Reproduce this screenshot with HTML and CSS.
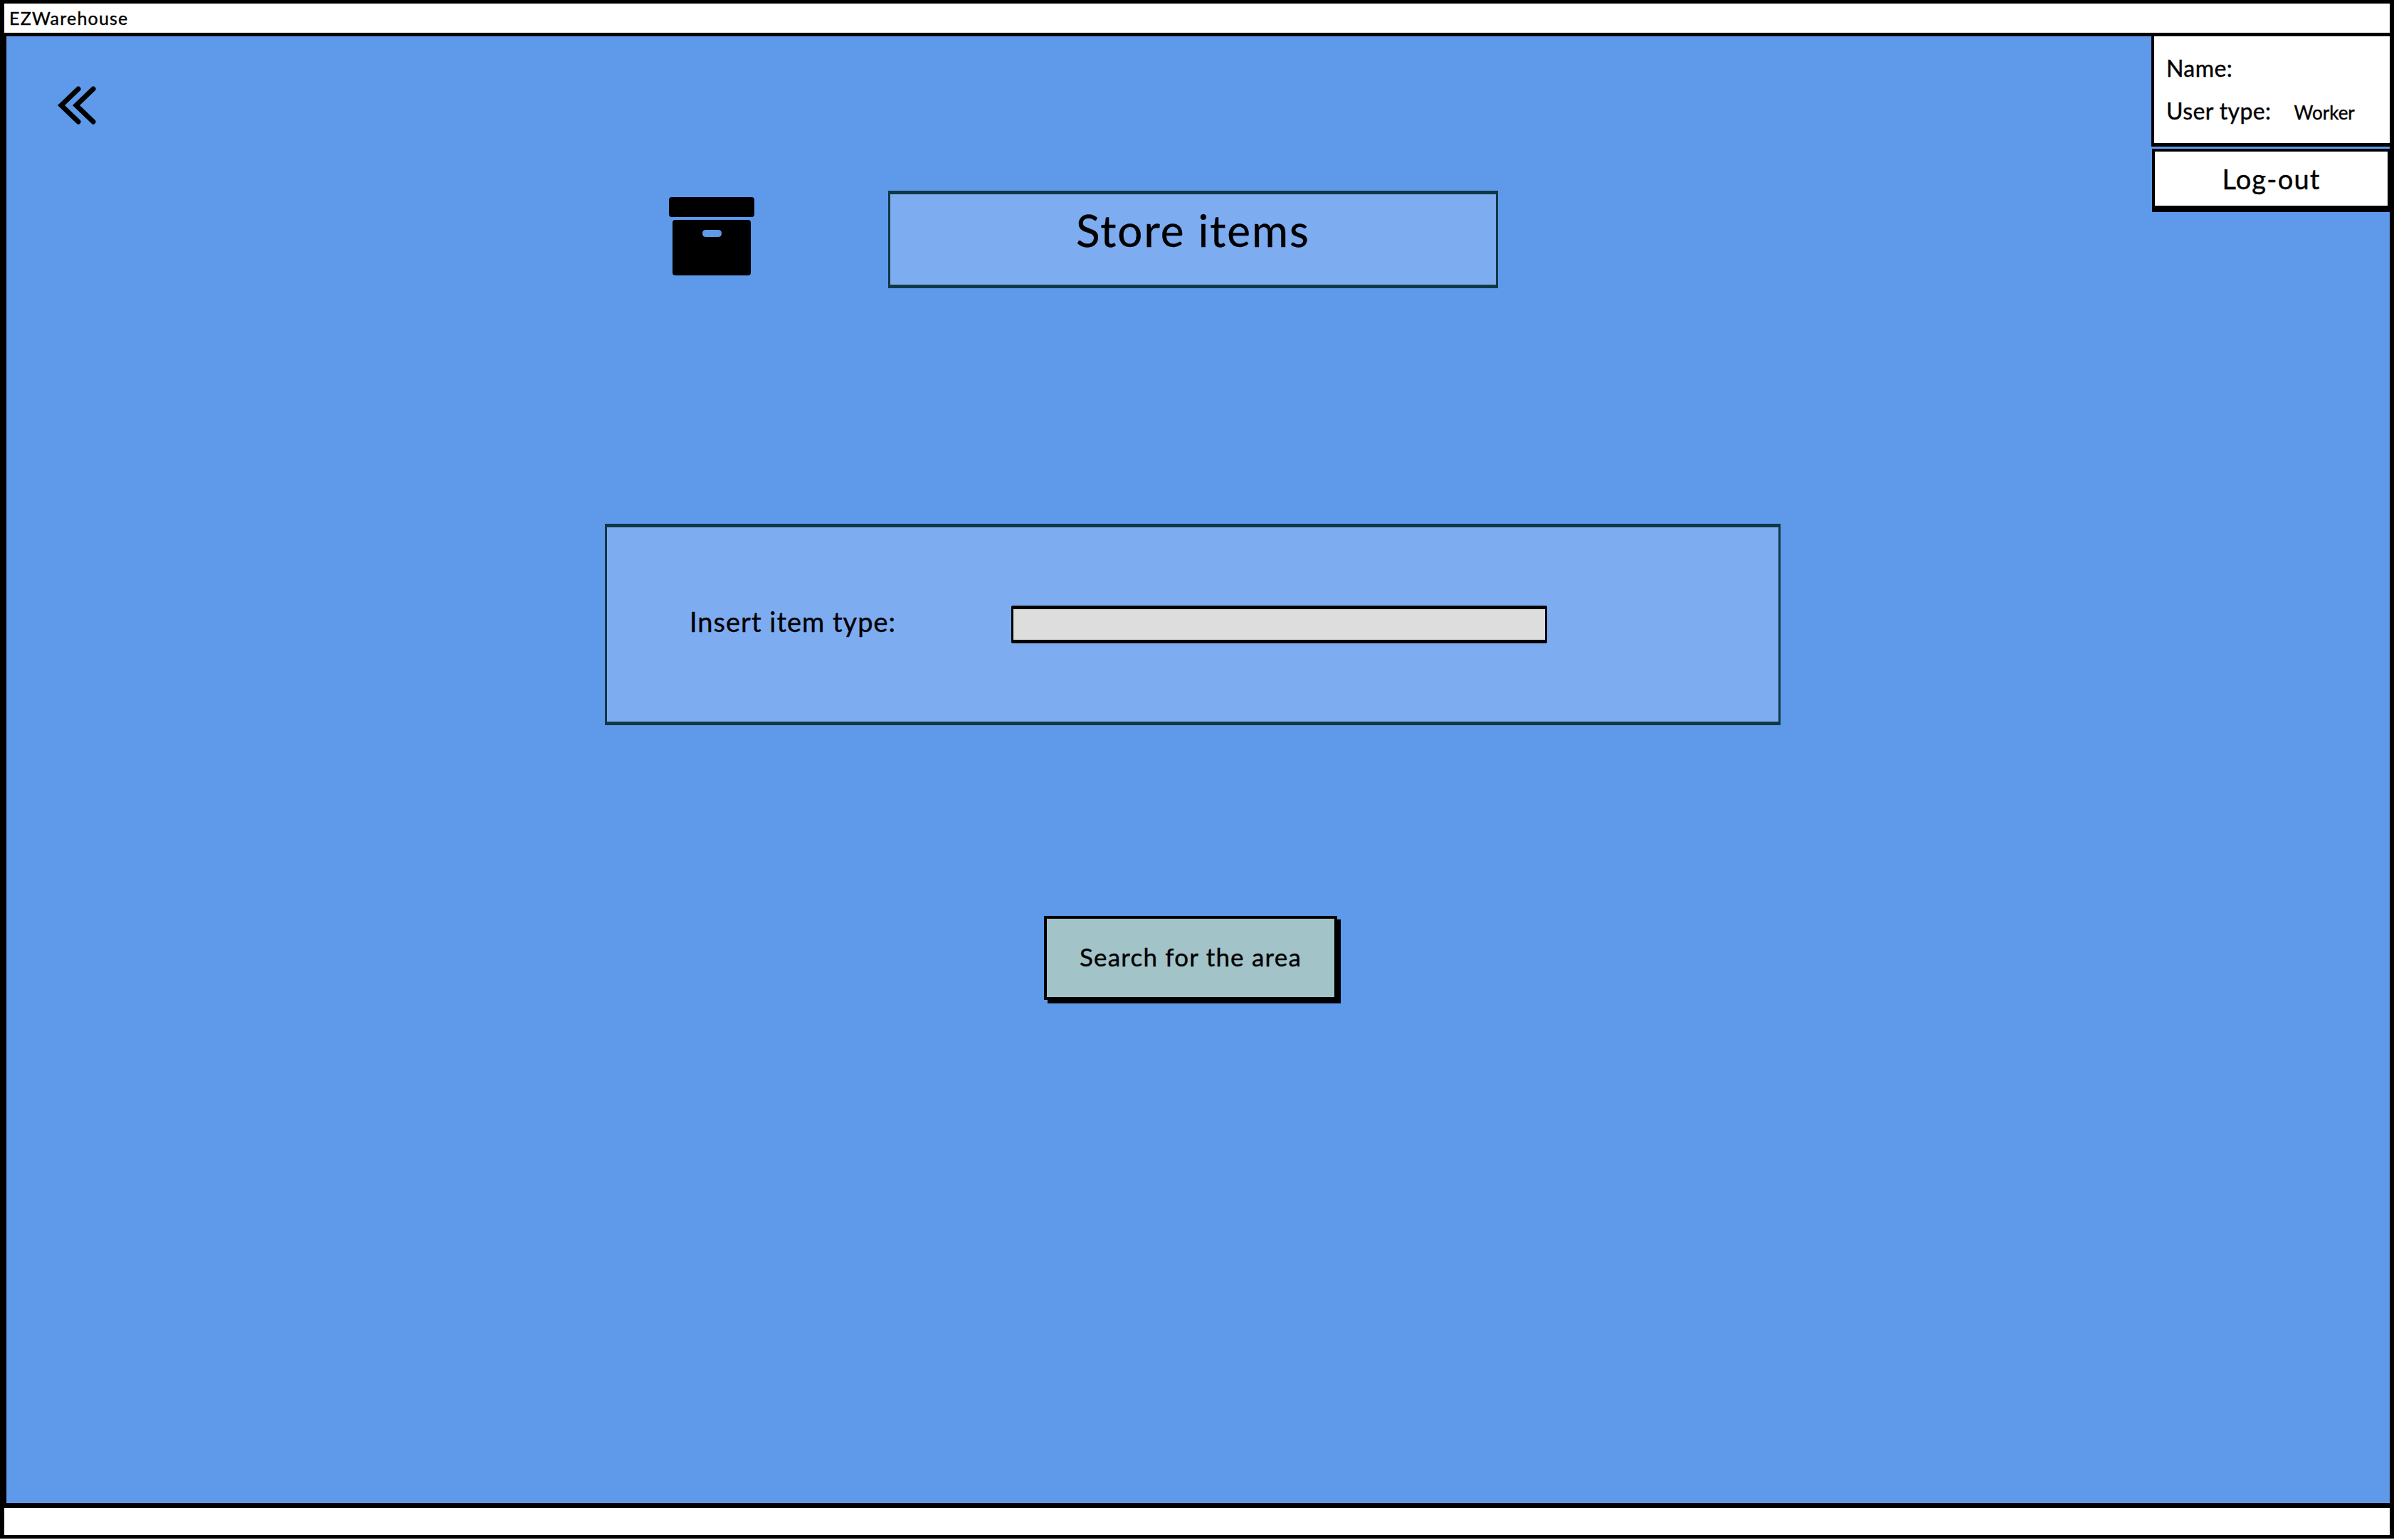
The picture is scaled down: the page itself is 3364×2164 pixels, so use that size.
FILE: index.html
```html
<!DOCTYPE html>
<html lang="en">
<head>
    <meta charset="UTF-8">
    <title>EZWarehouse</title>
    <link rel="stylesheet" href="styles.css">
</head>
<body>

<header class="topbar">EZWarehouse</header>

<main class="screen">
    <!-- user menu sits over the corner of the screen -->
    <aside class="user-menu">
        <div class="user-info">
            <p class="user-line">Name:</p>
            <p class="user-line">User type:<span class="user-value">Worker</span></p>
        </div>
        <button class="logout">Log-out</button>
    </aside>

    <svg class="back" viewBox="0 0 56 56" aria-label="Back">
        <path d="M30 5 L6 28 L30 51 M51 5 L27 28 L51 51"></path>
    </svg>

    <div class="title-row">
        <svg class="box-icon" viewBox="0 0 120 110">
            <rect class="box-part" x="0" y="0" width="120" height="28" rx="4"></rect>
            <path class="box-part" fill-rule="evenodd" d="M9 32 H111 Q115 32 115 36 V106 Q115 110 111 110 H9 Q5 110 5 106 V36 Q5 32 9 32 Z M52 46 Q47 46 47 51 Q47 56 52 56 H69 Q74 56 74 51 Q74 46 69 46 Z"></path>
        </svg>
        <h1 class="title">Store items</h1>
    </div>

    <form class="item-form">
        <label class="item-label" for="itemType">Insert item type:</label>
        <input class="item-input" type="text" id="itemType">
    </form>

    <button class="search">Search for the area</button>
</main>

<footer class="bottombar"></footer>

</body>
</html>
```

FILE: styles.css
```css
* {
    box-sizing: border-box;
}

body {
    margin: 0;
    height: 2164px;
    background-color: #fff;
    color: #000;
    font-family: "Lato", "Open Sans", sans-serif;
    -webkit-text-stroke: 0.4px #000;
}

button, input {
    font-family: inherit;
    color: inherit;
}

.topbar {
    height: 51px;
    padding-left: 7px;
    border: solid #000;
    border-width: 5px 6px 5px 6px;
    font-size: 25px;
    letter-spacing: 1.2px;
    line-height: 40px;
}

.screen {
    position: relative;
    display: flex;
    flex-direction: column;
    align-items: flex-start;
    height: 2061px;
    border-left: 9px solid #000;
    border-right: 6px solid #000;
    background-color: #5e99ea;
}

.user-menu {
    position: absolute;
    top: 0;
    right: -6px;
    width: 341px;
}

.user-info {
    height: 155px;
    padding: 25px 0 0 17px;
    border-left: 4px solid #000;
    border-right: 6px solid #000;
    border-bottom: 5px solid #000;
    background-color: #fff;
}

.user-line {
    display: flex;
    align-items: baseline;
    height: 60px;
    margin: 0;
    font-size: 32px;
    letter-spacing: 0.4px;
    line-height: 40px;
}

.user-value {
    margin-left: 32px;
    font-size: 26px;
    letter-spacing: 0;
}

.logout {
    display: block;
    width: 340px;
    height: 80px;
    margin: 3px 0 0 1px;
    padding: 0;
    border: solid #000;
    border-width: 4px 9px 0 4px;
    background-color: #fff;
    box-shadow: 0 9px 0 #000;
    font-size: 38px;
    letter-spacing: 1.2px;
}

.back {
    width: 56px;
    height: 56px;
    margin: 69px 0 0 71px;
}

.back path {
    fill: none;
    stroke: #000;
    stroke-width: 7;
    stroke-linecap: round;
    stroke-linejoin: miter;
}

.title-row {
    display: flex;
    align-items: flex-start;
    margin: 92px 0 0 931px;
}

.box-icon {
    width: 120px;
    height: 110px;
    margin: 9px 188px 0 0;
}

.box-part {
    fill: #000;
}

.title {
    width: 857px;
    height: 137px;
    margin: 0;
    padding-top: 12px;
    border: solid #0f3a45;
    border-width: 5px 3px 5px 3px;
    background-color: #7eacf1;
    font-size: 62px;
    font-weight: 400;
    letter-spacing: 2px;
    line-height: 76px;
    text-align: center;
}

.item-form {
    display: flex;
    align-items: center;
    width: 1652px;
    height: 283px;
    margin: 331px 0 0 841px;
    padding: 0 0 0 116px;
    border: solid #0f3a45;
    border-width: 5px 3px 5px 3px;
    background-color: #7eacf1;
}

.item-label {
    width: 452px;
    margin-top: -10px;
    font-size: 38px;
    letter-spacing: 1px;
}

.item-input {
    width: 753px;
    height: 53px;
    padding: 0;
    border: solid #000;
    border-width: 5px 3px 5px 3px;
    border-radius: 2px;
    background-color: #ddd;
}

.search {
    width: 412px;
    height: 118px;
    margin: 268px 0 0 1458px;
    padding: 0 0 4px;
    border: 4px solid #000;
    background-color: #a2c3c8;
    box-shadow: 5px 5px 0 #000;
    font-size: 35px;
    letter-spacing: 1.2px;
}

.bottombar {
    height: 50px;
    border: solid #000;
    border-width: 7px 6px 5px 6px;
}
```
